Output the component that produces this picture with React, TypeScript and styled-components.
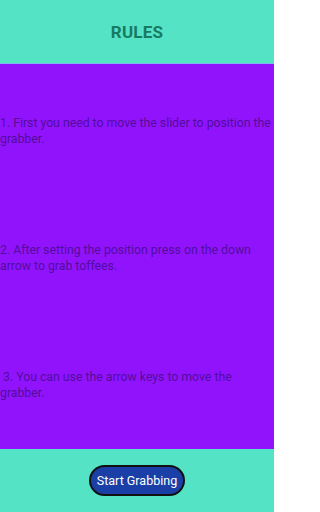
import React from "react";
import styled, { createGlobalStyle } from "styled-components";

const GlobalStyle = createGlobalStyle`
  html, body {
    margin: 0;
    padding: 0;
    height: 100%;
    overflow: hidden;
  }
  #root {
    height: 100%;
  }
`;

const Screen = styled.div`
  display: flex;
  flex-direction: column;
  height: 512px;
  width: 274px;
  overflow: hidden;
  font-family: Roboto, "Noto Sans", sans-serif;
  background-color: #55e3c5;
`;

const Header = styled.header`
  height: 63px;
  display: flex;
  align-items: center;
  justify-content: center;
  background-color: #55e3c5;
  border-bottom: 1px solid #7fb8f0;
`;

const Title = styled.h1`
  margin: 0;
  font-size: 17px;
  font-weight: 700;
  color: #177a62;
  letter-spacing: 0.2px;
`;

const Rules = styled.main`
  flex: 1;
  display: flex;
  flex-direction: column;
  justify-content: space-around;
  padding-top: 3px;
  background-color: #9013fc;
`;

const Rule = styled.p`
  margin: 0;
  font-size: 12.25px;
  line-height: 16px;
  color: rgba(40, 10, 90, 0.62);
`;

const Footer = styled.footer`
  height: 63px;
  display: flex;
  align-items: center;
  justify-content: center;
`;

const StartButton = styled.button`
  height: 31px;
  padding: 0 6px;
  border: 2px solid #111;
  border-radius: 16px;
  background-color: #1a40a8;
  color: #fff;
  font-family: Roboto, "Noto Sans", sans-serif;
  font-size: 12.5px;
`;

const rules = [
  "1. First you need to move the slider to position the grabber.",
  "2. After setting the position press on the down arrow to grab toffees.",
  " 3. You can use the arrow keys to move the grabber.",
];

export default function App() {
  return (
    <>
      <GlobalStyle />
      <Screen>
        <Header>
          <Title>RULES</Title>
        </Header>
        <Rules>
          {rules.map((r) => (
            <Rule key={r}>{r.startsWith(" ") ? "\u00a0" + r.slice(1) : r}</Rule>
          ))}
        </Rules>
        <Footer>
          <StartButton>Start Grabbing</StartButton>
        </Footer>
      </Screen>
    </>
  );
}
